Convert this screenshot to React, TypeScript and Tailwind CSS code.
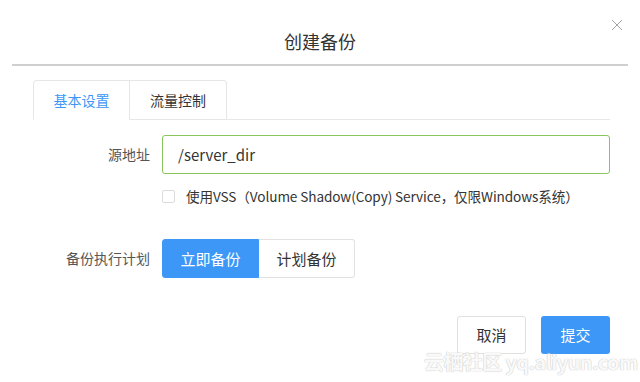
import React, { useState } from 'react';

const font = { fontFamily: '"Noto Sans CJK SC", "Noto Sans", sans-serif' };

const App: React.FC = () => {
  const [tab, setTab] = useState<'basic' | 'flow'>('basic');
  const [plan, setPlan] = useState<'now' | 'later'>('now');
  const [vss, setVss] = useState(false);

  return (
    <div className="relative w-[640px] h-[382px] bg-white overflow-hidden text-[#333]" style={font}>
      {/* header */}
      <div className="mx-[12px] h-[66px] border-b-2 border-[#cfcfcf] flex justify-center pt-[28px]">
        <h1 className="text-[18px] leading-[26px] text-[#333]">创建备份</h1>
      </div>
      <button className="absolute left-[611px] top-[18px] w-[13px] h-[13px] text-[#a3a3a3]">
        <svg viewBox="0 0 12 12" className="w-[12px] h-[12px]" fill="none" stroke="currentColor" strokeWidth="1">
          <path d="M1 1 L11 11 M11 1 L1 11" />
        </svg>
      </button>

      {/* tabs */}
      <div className="ml-[33px] mr-[30px] mt-[14px] flex border-b border-[#e8e8e8]">
        <button
          onClick={() => setTab('basic')}
          className={`w-[97px] h-[40px] -mb-px text-[14px] border border-[#e6e6e6] rounded-tl-[4px] ${tab === 'basic' ? 'bg-white border-b-white text-[#3d97f7]' : 'text-[#333]'}`}
        >
          基本设置
        </button>
        <button
          onClick={() => setTab('flow')}
          className={`w-[97px] h-[40px] -mb-px text-[14px] border border-l-0 border-[#e6e6e6] rounded-tr-[4px] ${tab === 'flow' ? 'bg-white border-b-white text-[#3d97f7]' : 'text-[#333]'}`}
        >
          流量控制
        </button>
      </div>

      {/* form */}
      <div className="ml-[33px] mr-[30px] mt-[15px]">
        <div className="flex items-center">
          <label className="w-[117px] text-right text-[14px] text-[#555]">源地址</label>
          <input
            defaultValue="/server_dir"
            className="ml-[12px] w-[448px] h-[39px] px-[15px] text-[15px] text-[#333] border border-[#88c55d] rounded-[3px] outline-none"
          />
        </div>
        <div className="flex items-center ml-[129px] mt-[12px]">
          <button
            onClick={() => setVss(!vss)}
            className={`w-[13px] h-[13px] border rounded-[2px] ${vss ? 'bg-[#3d97f7] border-[#3d97f7]' : 'border-[#dcdcdc] bg-white'}`}
          />
          <span className="ml-[11px] text-[13.6px] text-[#333] tracking-[-0.1px]">
            使用VSS（Volume Shadow(Copy) Service，仅限Windows系统）
          </span>
        </div>
        <div className="flex items-center mt-[33px]">
          <label className="w-[117px] text-right text-[14px] text-[#555]">备份执行计划</label>
          <div className="ml-[12px] flex h-[39px]">
            <button
              onClick={() => setPlan('now')}
              className={`w-[97px] text-[15px] rounded-l-[3px] border ${plan === 'now' ? 'bg-[#3d97f7] border-[#3d97f7] text-white' : 'bg-white border-[#e2e2e2] text-[#333]'}`}
            >
              立即备份
            </button>
            <button
              onClick={() => setPlan('later')}
              className={`w-[96px] text-[15px] rounded-r-[3px] border border-l-0 ${plan === 'later' ? 'bg-[#3d97f7] border-[#3d97f7] text-white' : 'bg-white border-[#e2e2e2] text-[#333]'}`}
            >
              计划备份
            </button>
          </div>
        </div>
        <div className="flex justify-end gap-[15px] mt-[38px]">
          <button className="w-[69px] h-[38px] text-[15px] text-[#333] bg-white border border-[#e0e0e0] rounded-[3px]">
            取消
          </button>
          <button className="w-[69px] h-[38px] text-[15px] text-white bg-[#3d97f7] rounded-[3px]">
            提交
          </button>
        </div>
      </div>

      {/* watermark */}
      <div className="absolute left-[424px] top-[351px] text-[20px] font-bold leading-[22px] tracking-[-0.6px] text-white/90 [text-shadow:0_0_1px_#c4c4c4,0_0_1px_#c4c4c4] pointer-events-none whitespace-nowrap">
        云栖社区 yq.aliyun.com
      </div>
    </div>
  );
};

export default App;
